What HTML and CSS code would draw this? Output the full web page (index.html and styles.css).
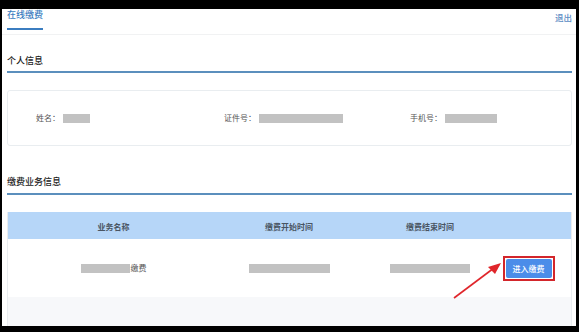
FILE: index.html
```html
<!DOCTYPE html>
<html lang="zh-CN">
<head>
<meta charset="utf-8">
<title>在线缴费</title>
<link rel="stylesheet" href="styles.css">
</head>
<body>
<div class="page">
  <div class="topbar">
    <div class="tab">在线缴费</div>
    <div class="logout">退出</div>
  </div>
  <div class="section">
    <div class="sec-title">个人信息</div>
    <div class="card">
      <div class="field"><span class="label">姓名：</span><span class="mask w27"></span></div>
      <div class="field"><span class="label">证件号：</span><span class="mask w84"></span></div>
      <div class="field"><span class="label">手机号：</span><span class="mask w52"></span></div>
    </div>
  </div>
  <div class="section">
    <div class="sec-title sec-title2">缴费业务信息</div>
    <div class="table">
      <div class="thead">
        <div class="cell">业务名称</div>
        <div class="cell">缴费开始时间</div>
        <div class="cell">缴费结束时间</div>
        <div class="cell"></div>
        <div class="cell"></div>
      </div>
      <div class="trow">
        <div class="cell"><span class="mask w49"></span><span class="txt">缴费</span></div>
        <div class="cell"><span class="mask w81"></span></div>
        <div class="cell"><span class="mask w80"></span></div>
        <div class="cell"><span class="mark"><button class="btn">进入缴费</button></span></div>
        <div class="cell"></div>
      </div>
      <div class="tfoot"></div>
    </div>
  </div>
  <svg class="arrow" width="60" height="45" viewBox="0 0 60 45">
    <line x1="4" y1="40" x2="44" y2="10" stroke="#e0262b" stroke-width="1.6"/>
    <polygon points="51,5 38,9 45,16" fill="#e0262b"/>
  </svg>
</div>
</body>
</html>
```

FILE: styles.css
```css
html, body {
  margin: 0;
  padding: 0;
  background: #000;
}
body {
  font-family: "Noto Sans CJK SC", "Noto Sans", sans-serif;
  width: 579px;
  height: 332px;
  overflow: hidden;
}
.page {
  position: relative;
  margin: 9px 0 0 2px;
  width: 574px;
  height: 317px;
  background: #fff;
  overflow: hidden;
}
.topbar {
  display: flex;
  justify-content: space-between;
  align-items: flex-start;
  height: 25px;
  padding: 0 4px 0 5px;
  border-bottom: 1px solid #f1f2f3;
}
.tab {
  font-size: 9px;
  font-weight: 500;
  line-height: 12px;
  color: #3b7dc0;
  padding-bottom: 7px;
  border-bottom: 2px solid #3b7dc0;
}
.logout {
  font-size: 8.5px;
  font-weight: 500;
  line-height: 12px;
  padding-top: 2px;
  color: #5b8cc4;
}
.section {
  padding: 0 4px 0 5px;
}
.sec-title {
  margin-top: 20px;
  font-size: 9px;
  font-weight: 500;
  line-height: 12px;
  color: #222;
  padding-bottom: 4px;
  border-bottom: 2px solid #5b8fbd;
}
.sec-title2 {
  margin-top: 30px;
  padding-bottom: 5px;
}
.card {
  margin-top: 17px;
  height: 54px;
  border: 1px solid #e9edf0;
  border-radius: 3px;
  padding-left: 28px;
  display: grid;
  grid-template-columns: 188px 186px 187px;
  align-items: center;
}
.field {
  display: flex;
  align-items: center;
}
.label {
  font-size: 8px;
  line-height: 10px;
  color: #555;
}
.mask {
  display: inline-block;
  height: 9px;
  background: #c2c2c2;
  margin-left: 3px;
}
.w27 { width: 27px; }
.w84 { width: 84px; }
.w52 { width: 52px; }
.w49 { width: 49px; margin-left: 0; }
.w81 { width: 81px; margin-left: 0; }
.w80 { width: 80px; margin-left: 0; }
.table {
  margin-top: 17px;
  border: 1px solid #e9edf0;
  border-top: none;
}
.thead, .trow {
  display: grid;
  grid-template-columns: 211px 140px 142px 52px 1fr;
}
.thead {
  height: 27px;
  background: #b6d6f8;
  align-items: center;
}
.thead .cell {
  text-align: center;
  font-size: 8px;
  font-weight: bold;
  line-height: 10px;
  color: #4a5563;
  padding-top: 2px;
}
.trow {
  height: 58px;
  align-items: center;
}
.trow .cell {
  display: flex;
  justify-content: center;
  align-items: center;
}
.txt {
  font-size: 8px;
  line-height: 10px;
  color: #555;
  margin-left: 1px;
}
.mark {
  display: inline-flex;
  border: 2px solid #d3262b;
  padding: 1px;
  margin-left: 3px;
}
.btn {
  width: 46px;
  height: 19px;
  border: none;
  border-radius: 2px;
  background: #4b8de9;
  color: #fff;
  font-family: inherit;
  font-size: 8px;
  font-weight: 500;
  padding: 0;
}
.tfoot {
  height: 29px;
  background: #f7f8fa;
}
.arrow {
  position: absolute;
  left: 448px;
  top: 249px;
}
```
